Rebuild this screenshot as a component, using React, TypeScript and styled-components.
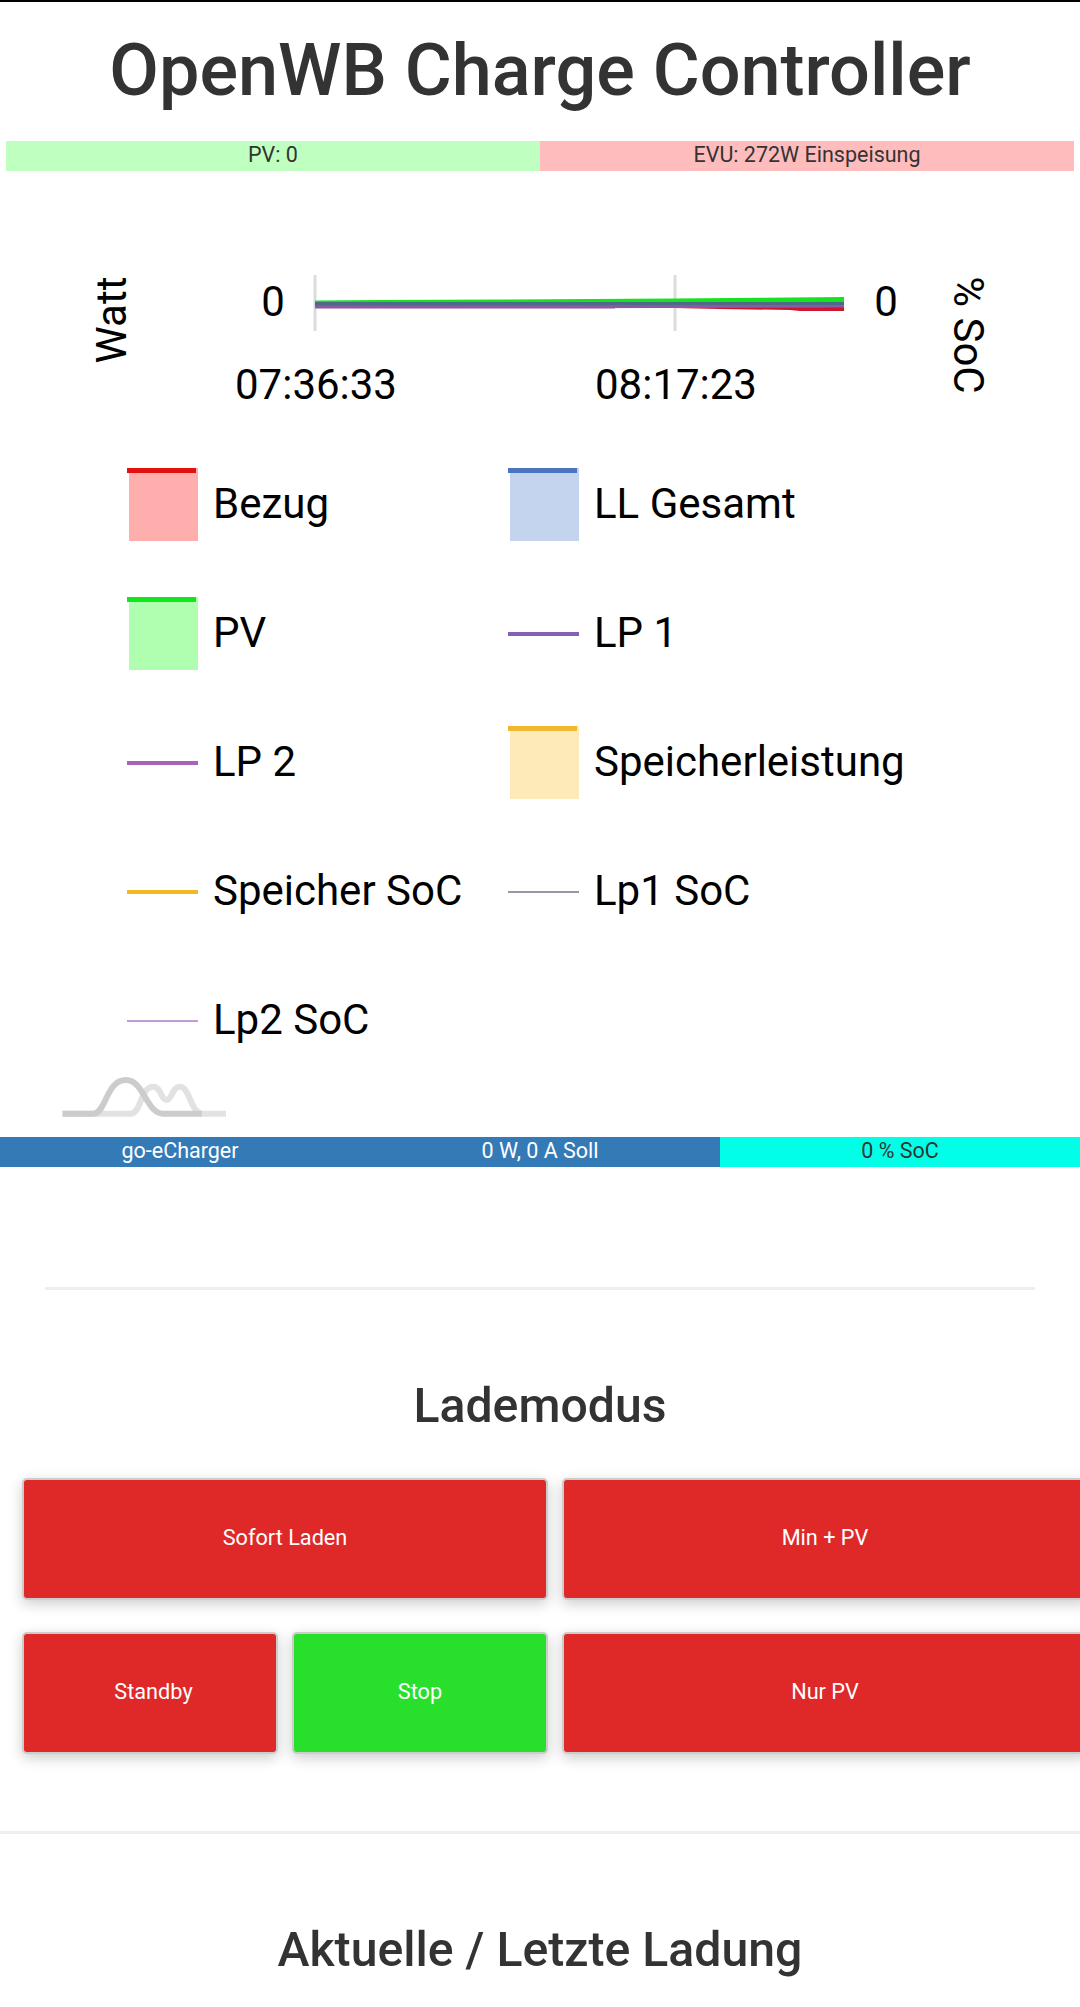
import React, { FC } from "react";
import styled, { createGlobalStyle } from "styled-components";

const LEGEND = [
  { label: "Bezug", color: "#e31010", fill: "#ffaeae" },
  { label: "LL Gesamt", color: "#4a74bc", fill: "#c5d4ee" },
  { label: "PV", color: "#12e61c", fill: "#b0ffb0" },
  { label: "LP 1", color: "#8560b8", size: 4 },
  { label: "LP 2", color: "#a862bc", size: 4 },
  { label: "Speicherleistung", color: "#eeb92e", fill: "#fdeab8" },
  { label: "Speicher SoC", color: "#f0bb22", size: 4 },
  { label: "Lp1 SoC", color: "#9a93ab", size: 2 },
  { label: "Lp2 SoC", color: "#c59ad0", size: 2 },
];

const App: FC = () => (
  <Page>
    <GlobalStyle />
    <Title>OpenWB Charge Controller</Title>
    <PowerBar>
      <PowerCell $bg="#bfffbf">PV: 0</PowerCell>
      <PowerCell $bg="#ffbcbc">EVU: 272W Einspeisung</PowerCell>
    </PowerBar>

    <Chart viewBox="0 171 1080 268">
      <line x1="315" y1="275" x2="315" y2="331" stroke="#dcdcdc" strokeWidth="3" />
      <line x1="675" y1="275" x2="675" y2="331" stroke="#dcdcdc" strokeWidth="3" />
      <polygon points="315,300.5 380,300 500,299.5 675,298.5 760,297.8 844,297 844,303 315,303" fill="#14e41e" />
      <polygon points="675,306 844,306 844,311 800,311 790,310 720,309 675,308" fill="#cc1530" />
      <rect x="315" y="302" width="529" height="4" fill="#4f6a86" />
      <polygon points="315,305.5 844,305 844,307.5 675,308 315,308.3" fill="#8a5aa5" />
      <rect x="315" y="308" width="300" height="1" fill="#c9a2d4" />
      <ChartText x="273" y="316" textAnchor="middle">0</ChartText>
      <ChartText x="886" y="316" textAnchor="middle">0</ChartText>
      <ChartText x="316" y="399" textAnchor="middle">07:36:33</ChartText>
      <ChartText x="676" y="399" textAnchor="middle">08:17:23</ChartText>
      <ChartText x="126" y="320" textAnchor="middle" transform="rotate(-90 126 320)">Watt</ChartText>
      <ChartText x="954" y="335" textAnchor="middle" transform="rotate(90 954 335)">% SoC</ChartText>
    </Chart>

    <Legend>
      {LEGEND.map((item) => (
        <LegendItem key={item.label}>
          <Swatch $color={item.color} $fill={item.fill} $size={item.size} />
          {item.label}
        </LegendItem>
      ))}
    </Legend>

    <Wave viewBox="0 0 164 42">
      <path d="M0 38.7H68C80 38.7 78 11.7 91.3 11.7C99 11.7 99 25 104.7 25C110 25 110 11.7 118 11.7C128 11.7 128 38.7 141.3 38.7H164" fill="none" stroke="#e2e2e2" strokeWidth="6" />
      <path d="M1 38.7H31.3C44 38.7 44 5 64 5C82 5 84 38.7 101.3 38.7H139.7" fill="none" stroke="#cccccc" strokeWidth="6" />
    </Wave>

    <ChargerBar>
      <ChargerCell $bg="#337ab7" $fg="#fff">go-eCharger</ChargerCell>
      <ChargerCell $bg="#337ab7" $fg="#fff">0 W, 0 A Soll</ChargerCell>
      <ChargerCell $bg="#00ffe6" $fg="#333">0 % SoC</ChargerCell>
    </ChargerBar>

    <ShortRule />
    <SectionTitle>Lademodus</SectionTitle>
    <ModeGrid>
      <ModeButton>Sofort Laden</ModeButton>
      <ModeButton>Min + PV</ModeButton>
      <ModeButton $indent={7}>Standby</ModeButton>
      <ModeButton $active>Stop</ModeButton>
      <ModeButton>Nur PV</ModeButton>
    </ModeGrid>
    <FullRule />
    <SectionTitle>Aktuelle / Letzte Ladung</SectionTitle>
  </Page>
);

const GlobalStyle = createGlobalStyle`
  html, body {
    margin: 0;
    padding: 0;
    background: #fff;
    overflow-x: hidden;
  }
  * {
    box-sizing: border-box;
  }
`;

const Page = styled.div`
  width: 1080px;
  height: 2007px;
  overflow: hidden;
  border-top: 2px solid #000;
  font-family: Roboto, "Liberation Sans", sans-serif;
  color: #333;
`;

const Title = styled.h1`
  margin: 0;
  height: 139px;
  padding-top: 27px;
  font-size: 72px;
  line-height: 84px;
  font-weight: 500;
  text-align: center;
`;

const PowerBar = styled.div`
  display: grid;
  grid-template-columns: 1fr 1fr;
  margin: 0 6px;
`;

const PowerCell = styled.div<{ $bg: string }>`
  height: 30px;
  background: ${(p) => p.$bg};
  font-size: 21.5px;
  line-height: 27px;
  text-align: center;
`;

const Chart = styled.svg`
  display: block;
  width: 1080px;
  height: 268px;
`;

const ChartText = styled.text`
  font-family: Roboto, sans-serif;
  font-size: 42px;
  fill: #000;
`;

const Legend = styled.div`
  display: grid;
  grid-template-columns: 381px 1fr;
  grid-auto-rows: 129px;
  height: 636px;
  padding-left: 127px;
`;

const LegendItem = styled.div`
  display: flex;
  align-items: center;
  gap: 15px;
  font-size: 42px;
  color: #000;
`;

const Swatch = styled.span<{ $color: string; $fill?: string; $size?: number }>`
  flex: none;
  width: 71px;
  height: ${(p) => (p.$fill ? "73px" : `${p.$size}px`)};
  margin-top: 2px;
  background: ${(p) => (p.$fill ? `linear-gradient(${p.$color}, ${p.$color}) top left / 69px 5px no-repeat, linear-gradient(${p.$fill}, ${p.$fill}) 2px 0 / 69px 100% no-repeat` : p.$color)};
`;

const Wave = styled.svg`
  display: block;
  width: 164px;
  height: 42px;
  margin: 0 0 20px 62px;
`;

const ChargerBar = styled.div`
  display: grid;
  grid-template-columns: repeat(3, 360px);
`;

const ChargerCell = styled.div<{ $bg: string; $fg: string }>`
  height: 30px;
  background: ${(p) => p.$bg};
  color: ${(p) => p.$fg};
  font-size: 21.5px;
  line-height: 28px;
  text-align: center;
`;

const ShortRule = styled.hr`
  margin: 120px 45px 0;
  border: 0;
  border-top: 3px solid #eee;
`;

const SectionTitle = styled.h2`
  margin: 0;
  height: 188px;
  padding-top: 89px;
  font-size: 48.2px;
  line-height: 54px;
  font-weight: 500;
  text-align: center;
`;

const ModeGrid = styled.div`
  display: grid;
  grid-template-columns: 256px 256px 526px;
  grid-auto-rows: 122px;
  column-gap: 14px;
  row-gap: 32px;
  padding-left: 22px;
  & > :nth-child(1) {
    grid-column: 1 / span 2;
  }
`;

const ModeButton = styled.button<{ $active?: boolean; $indent?: number }>`
  border: 2.5px solid #ccc;
  border-radius: 5px;
  background: ${(p) => (p.$active ? "#28e02c" : "#df2929")};
  box-shadow: 0 4px 14px rgba(0, 0, 0, 0.2);
  color: #fff;
  font-family: Roboto, sans-serif;
  font-size: 21.7px;
  padding: 0 0 4px ${(p) => p.$indent ?? 0}px;
`;

const FullRule = styled.hr`
  margin: 77px 0 0;
  border: 0;
  border-top: 3px solid #eee;
`;

export default App;
